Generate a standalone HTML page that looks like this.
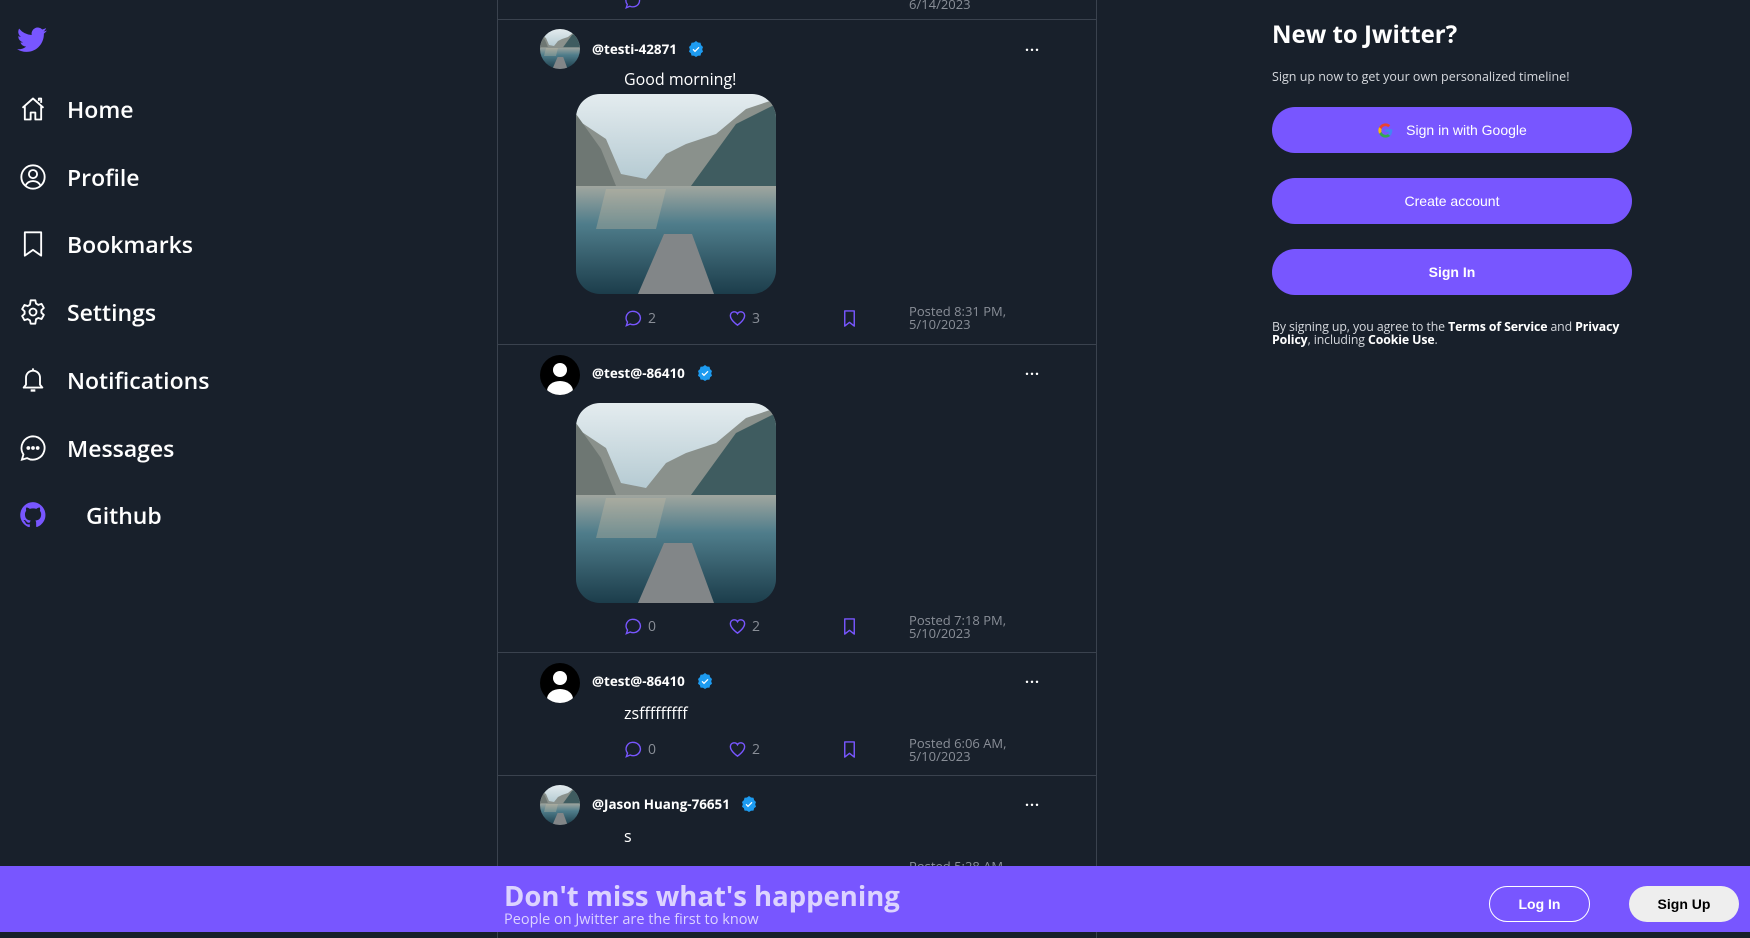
<!DOCTYPE html>
<html><head><meta charset="utf-8"><style>
*{margin:0;padding:0;box-sizing:border-box}
body{width:1750px;height:932px;background:#18202b;overflow:hidden;position:relative;font-family:"Open Sans","Liberation Sans",sans-serif;color:#fff}
.abs{position:absolute}
.nav{position:absolute;left:19px;display:flex;align-items:center;height:40px}
.nav svg{width:28px;height:28px}
.nav span{position:absolute;left:48px;font-size:23px;font-weight:600;white-space:nowrap}
.feed{position:absolute;left:497px;top:-2px;width:600px;height:940px;border-left:1px solid #3a424e;border-right:1px solid #3a424e}
.sep{position:absolute;left:0;width:598px;height:1px;background:#3a424e}
.av{position:absolute;left:42px;width:40px;height:40px;border-radius:50%;overflow:hidden}
.un{position:absolute;left:94px;font-size:13.4px;font-weight:700}
.vb{position:absolute;width:16px;height:16px}
.dots{position:absolute;left:527px;font-size:14px;font-weight:700;letter-spacing:1px}
.txt{position:absolute;left:126px;font-size:16px}
.img{position:absolute;left:78px;width:200px;height:200px;border-radius:24px;overflow:hidden}
.act{position:absolute;font-size:14px;color:#8a8f98;display:flex;align-items:center;gap:5px}
.posted{position:absolute;left:411px;font-size:13px;line-height:13px;color:#8a8f98}
.btn{position:absolute;left:1272px;width:360px;height:46px;border-radius:23px;background:#7856ff;color:#fff;font-family:"Liberation Sans",sans-serif;font-size:14px;display:flex;align-items:center;justify-content:center}
</style></head><body>
<svg class="abs" style="left:17px;top:27px" width="30" height="26" viewBox="0 0 24 20"><path fill="#7856ff" d="M24 2.4a9.8 9.8 0 0 1-2.8.8A4.9 4.9 0 0 0 23.3.4a9.9 9.9 0 0 1-3.1 1.2A4.9 4.9 0 0 0 11.8 6 14 14 0 0 1 1.7.9a4.9 4.9 0 0 0 1.5 6.6 4.9 4.9 0 0 1-2.2-.6 4.9 4.9 0 0 0 3.9 4.9 4.9 4.9 0 0 1-2.2.1 4.9 4.9 0 0 0 4.6 3.4A9.9 9.9 0 0 1 0 17.3 14 14 0 0 0 7.5 19.5c9.1 0 14-7.5 14-14v-.6A10 10 0 0 0 24 2.4z"/></svg>

<div class="nav" style="top:89px"><svg viewBox="0 0 24 24" fill="none" stroke="#fff" stroke-width="1.6" stroke-linejoin="round"><path d="M3 11L12 3l9 8M5 9.5V21h5v-6h4v6h5V9.5M17 5V3h2v3.8"/></svg><span>Home</span></div>
<div class="nav" style="top:157px"><svg viewBox="0 0 24 24" fill="none" stroke="#fff" stroke-width="1.6"><circle cx="12" cy="12" r="10"/><circle cx="12" cy="9.5" r="3.5"/><path d="M5.5 19.5c1.5-3 4-4 6.5-4s5 1 6.5 4"/></svg><span>Profile</span></div>
<div class="nav" style="top:224px"><svg viewBox="0 0 24 24" fill="none" stroke="#fff" stroke-width="1.6" stroke-linejoin="round"><path d="M5 2h14v20l-7-5-7 5z"/></svg><span>Bookmarks</span></div>
<div class="nav" style="top:292px"><svg viewBox="0 0 24 24" fill="none" stroke="#fff" stroke-width="1.6" stroke-linejoin="round"><circle cx="12" cy="12" r="3"/><path d="M10 2h4l.6 2.8 2 1.1 2.7-.9 2 3.5-2.1 1.9v2.2l2.1 1.9-2 3.5-2.7-.9-2 1.1L14 22h-4l-.6-2.8-2-1.1-2.7.9-2-3.5 2.1-1.9V11.4L2.7 9.5l2-3.5 2.7.9 2-1.1z"/></svg><span>Settings</span></div>
<div class="nav" style="top:360px"><svg viewBox="0 0 24 24" fill="none" stroke="#fff" stroke-width="1.6" stroke-linejoin="round"><path d="M12 2v1.5M6 10a6 6 0 0 1 12 0v6l2 2.5H4L6 16z"/><path d="M10 21h4" stroke-width="2"/></svg><span>Notifications</span></div>
<div class="nav" style="top:428px"><svg viewBox="0 0 24 24" fill="none" stroke="#fff" stroke-width="1.6"><path d="M12 2a10 10 0 1 1-5 18.7L2.5 22l1.3-4.5A10 10 0 0 1 12 2z"/><circle cx="8" cy="12" r=".8" fill="#fff"/><circle cx="12" cy="12" r=".8" fill="#fff"/><circle cx="16" cy="12" r=".8" fill="#fff"/></svg><span>Messages</span></div>
<div class="nav" style="top:495px"><svg viewBox="0 0 24 24"><path fill="#7856ff" d="M12 1a11 11 0 0 0-3.5 21.4c.6.1.8-.2.8-.5v-2c-3.1.7-3.7-1.3-3.7-1.3-.5-1.3-1.2-1.6-1.2-1.6-1-.7.1-.7.1-.7 1.1.1 1.7 1.1 1.7 1.1 1 1.7 2.6 1.2 3.2.9.1-.7.4-1.2.7-1.5-2.4-.3-5-1.2-5-5.4 0-1.2.4-2.2 1.1-2.9-.1-.3-.5-1.4.1-2.9 0 0 .9-.3 3 1.1a10.4 10.4 0 0 1 5.5 0c2.1-1.4 3-1.1 3-1.1.6 1.5.2 2.6.1 2.9.7.8 1.1 1.7 1.1 2.9 0 4.2-2.6 5.1-5 5.4.4.3.7 1 .7 2v3c0 .3.2.6.8.5A11 11 0 0 0 12 1z"/></svg><span style="left:67px">Github</span></div>

<svg width="0" height="0" style="position:absolute"><defs>
<linearGradient id="sky" x1="0" y1="0" x2="0" y2="1"><stop offset="0" stop-color="#e4ecef"/><stop offset="1" stop-color="#b3c9d1"/></linearGradient>
<linearGradient id="wat" x1="0" y1="0" x2="0" y2="1"><stop offset="0" stop-color="#a0a69f"/><stop offset=".35" stop-color="#4f7d8b"/><stop offset="1" stop-color="#1c3d4b"/></linearGradient>
<symbol id="lake" viewBox="0 0 200 200"><rect width="200" height="90" fill="url(#sky)"/><path d="M0 25L30 45 45 80 70 85 90 60 110 50 140 40 170 15 200 5V92H0z" fill="#8a918c"/><path d="M115 92L160 30 200 10V92z" fill="#3f5c60"/><path d="M0 20L25 55 40 92H0z" fill="#6e7773"/><rect y="92" width="200" height="108" fill="url(#wat)"/><path d="M30 95h60l-10 40H20z" fill="#c7b9a3" opacity=".35"/><path d="M88 140h28l22 60H62z" fill="#828688"/></symbol>
<symbol id="prs" viewBox="0 0 40 40"><rect width="40" height="40" fill="#000"/><circle cx="20" cy="15" r="7" fill="#fff"/><ellipse cx="20" cy="36" rx="13" ry="10" fill="#fff"/></symbol>
<symbol id="vb" viewBox="0 0 16 16"><path fill="#1d9bf0" d="M8 0l2 1.5 2.5.2.6 2.4L15 6l-.8 2.3.8 2.4-1.9 1.5-.6 2.4-2.5.2L8 16l-2-1.2-2.5-.2-.6-2.4L1 10.7 1.8 8.3 1 6l1.9-1.9.6-2.4L6 1.5z"/><path d="M5 8.3l2 2 4-4" stroke="#fff" stroke-width="1.3" fill="none"/></symbol>
<symbol id="cm" viewBox="0 0 20 20"><path d="M10 2.5a7.5 7 0 1 1-3.5 13.3L2.5 17.5l1.2-3.7A7 7 0 0 1 10 2.5z" fill="none" stroke="#7856ff" stroke-width="1.5"/></symbol>
<symbol id="ht" viewBox="0 0 20 20"><path d="M10 17S2.5 12 2.5 7a4 4 0 0 1 7.5-2 4 4 0 0 1 7.5 2c0 5-7.5 10-7.5 10z" fill="none" stroke="#7856ff" stroke-width="1.5"/></symbol>
<symbol id="bm" viewBox="0 0 20 20"><path d="M5 2h10v16l-5-4-5 4z" fill="none" stroke="#7856ff" stroke-width="1.5" stroke-linejoin="round"/></symbol>
</defs></svg>

<div class="feed">
 <div class="act" style="left:126px;top:-6px"><svg width="18" height="18"><use href="#cm"/></svg></div>
 <div class="posted" style="top:0px">6/14/2023</div>
 <div class="sep" style="top:21px"></div>

 <div class="av" style="top:31px"><svg width="40" height="40"><use href="#lake"/></svg></div>
 <div class="un" style="top:42px">@testi-42871</div><svg class="vb" style="left:190px;top:43px"><use href="#vb"/></svg>
 <div class="dots" style="top:43px">···</div>
 <div class="txt" style="top:70px">Good morning!</div>
 <div class="img" style="top:96px"><svg width="200" height="200"><use href="#lake"/></svg></div>
 <div class="act" style="left:126px;top:311px"><svg width="19" height="19"><use href="#cm"/></svg>2</div>
 <div class="act" style="left:230px;top:311px"><svg width="19" height="19"><use href="#ht"/></svg>3</div>
 <div class="act" style="left:342px;top:311px"><svg width="19" height="19"><use href="#bm"/></svg></div>
 <div class="posted" style="top:307px">Posted 8:31 PM,<br>5/10/2023</div>
 <div class="sep" style="top:346px"></div>

 <div class="av" style="top:357px"><svg width="40" height="40"><use href="#prs"/></svg></div>
 <div class="un" style="top:366px">@test@-86410</div><svg class="vb" style="left:199px;top:367px"><use href="#vb"/></svg>
 <div class="dots" style="top:367px">···</div>
 <div class="img" style="top:405px"><svg width="200" height="200"><use href="#lake"/></svg></div>
 <div class="act" style="left:126px;top:619px"><svg width="19" height="19"><use href="#cm"/></svg>0</div>
 <div class="act" style="left:230px;top:619px"><svg width="19" height="19"><use href="#ht"/></svg>2</div>
 <div class="act" style="left:342px;top:619px"><svg width="19" height="19"><use href="#bm"/></svg></div>
 <div class="posted" style="top:616px">Posted 7:18 PM,<br>5/10/2023</div>
 <div class="sep" style="top:654px"></div>

 <div class="av" style="top:665px"><svg width="40" height="40"><use href="#prs"/></svg></div>
 <div class="un" style="top:674px">@test@-86410</div><svg class="vb" style="left:199px;top:675px"><use href="#vb"/></svg>
 <div class="dots" style="top:675px">···</div>
 <div class="txt" style="top:704px">zsfffffffff</div>
 <div class="act" style="left:126px;top:742px"><svg width="19" height="19"><use href="#cm"/></svg>0</div>
 <div class="act" style="left:230px;top:742px"><svg width="19" height="19"><use href="#ht"/></svg>2</div>
 <div class="act" style="left:342px;top:742px"><svg width="19" height="19"><use href="#bm"/></svg></div>
 <div class="posted" style="top:739px">Posted 6:06 AM,<br>5/10/2023</div>
 <div class="sep" style="top:777px"></div>

 <div class="av" style="top:787px"><svg width="40" height="40"><use href="#lake"/></svg></div>
 <div class="un" style="top:797px">@Jason Huang-76651</div><svg class="vb" style="left:243px;top:798px"><use href="#vb"/></svg>
 <div class="dots" style="top:798px">···</div>
 <div class="txt" style="top:827px">s</div>
 <div class="posted" style="top:862px">Posted 5:28 AM,</div>
</div>

<div class="abs" style="left:1272px;top:18px;font-size:24px;font-weight:700">New to Jwitter?</div>
<div class="abs" style="left:1272px;top:68px;font-size:12.5px;color:#d5d8dd">Sign up now to get your own personalized timeline!</div>
<div class="btn" style="top:107px"><svg width="17" height="17" viewBox="0 0 24 24" style="margin-right:12px"><path d="M21.6 12.2c0-.7-.1-1.4-.2-2H12v3.8h5.4a4.6 4.6 0 0 1-2 3v2.5h3.2c1.9-1.7 3-4.3 3-7.3z" fill="#4285f4"/><path d="M12 22c2.7 0 5-.9 6.6-2.4l-3.2-2.5c-.9.6-2 1-3.4 1-2.6 0-4.8-1.8-5.6-4.1H3.1v2.6A10 10 0 0 0 12 22z" fill="#34a853"/><path d="M6.4 14c-.4-1.3-.4-2.7 0-4V7.4H3.1a10 10 0 0 0 0 9.2z" fill="#fbbc05"/><path d="M12 5.9c1.5 0 2.8.5 3.8 1.5l2.9-2.9A10 10 0 0 0 3.1 7.4L6.4 10C7.2 7.7 9.4 5.9 12 5.9z" fill="#ea4335"/></svg>Sign in with Google</div>
<div class="btn" style="top:178px">Create account</div>
<div class="btn" style="top:249px;font-weight:700">Sign In</div>
<div class="abs" style="left:1272px;top:320px;width:370px;font-size:12.3px;line-height:13px;color:#d5d8dd;letter-spacing:-0.1px">By signing up, you agree to the <b style="color:#fff">Terms of Service</b> and <b style="color:#fff">Privacy Policy</b>, including <b style="color:#fff">Cookie Use</b>.</div>

<div class="abs" style="left:0;top:866px;width:1750px;height:66px;background:#7856ff">
 <div class="abs" style="left:504px;top:12px;font-size:27.5px;font-weight:700;color:#dcd3ff;white-space:nowrap">Don't miss what's happening</div>
 <div class="abs" style="left:504px;top:44px;font-size:14.5px;color:#dcd3ff;white-space:nowrap">People on Jwitter are the first to know</div>
 <div class="abs" style="left:1489px;top:20px;width:101px;height:36px;border:1.5px solid #fff;border-radius:18px;font-family:'Liberation Sans',sans-serif;font-size:14px;font-weight:700;display:flex;align-items:center;justify-content:center">Log In</div>
 <div class="abs" style="left:1629px;top:20px;width:110px;height:36px;background:#eeeeee;border-radius:18px;color:#000;font-family:'Liberation Sans',sans-serif;font-size:14px;font-weight:700;display:flex;align-items:center;justify-content:center">Sign Up</div>
</div>
</body></html>
